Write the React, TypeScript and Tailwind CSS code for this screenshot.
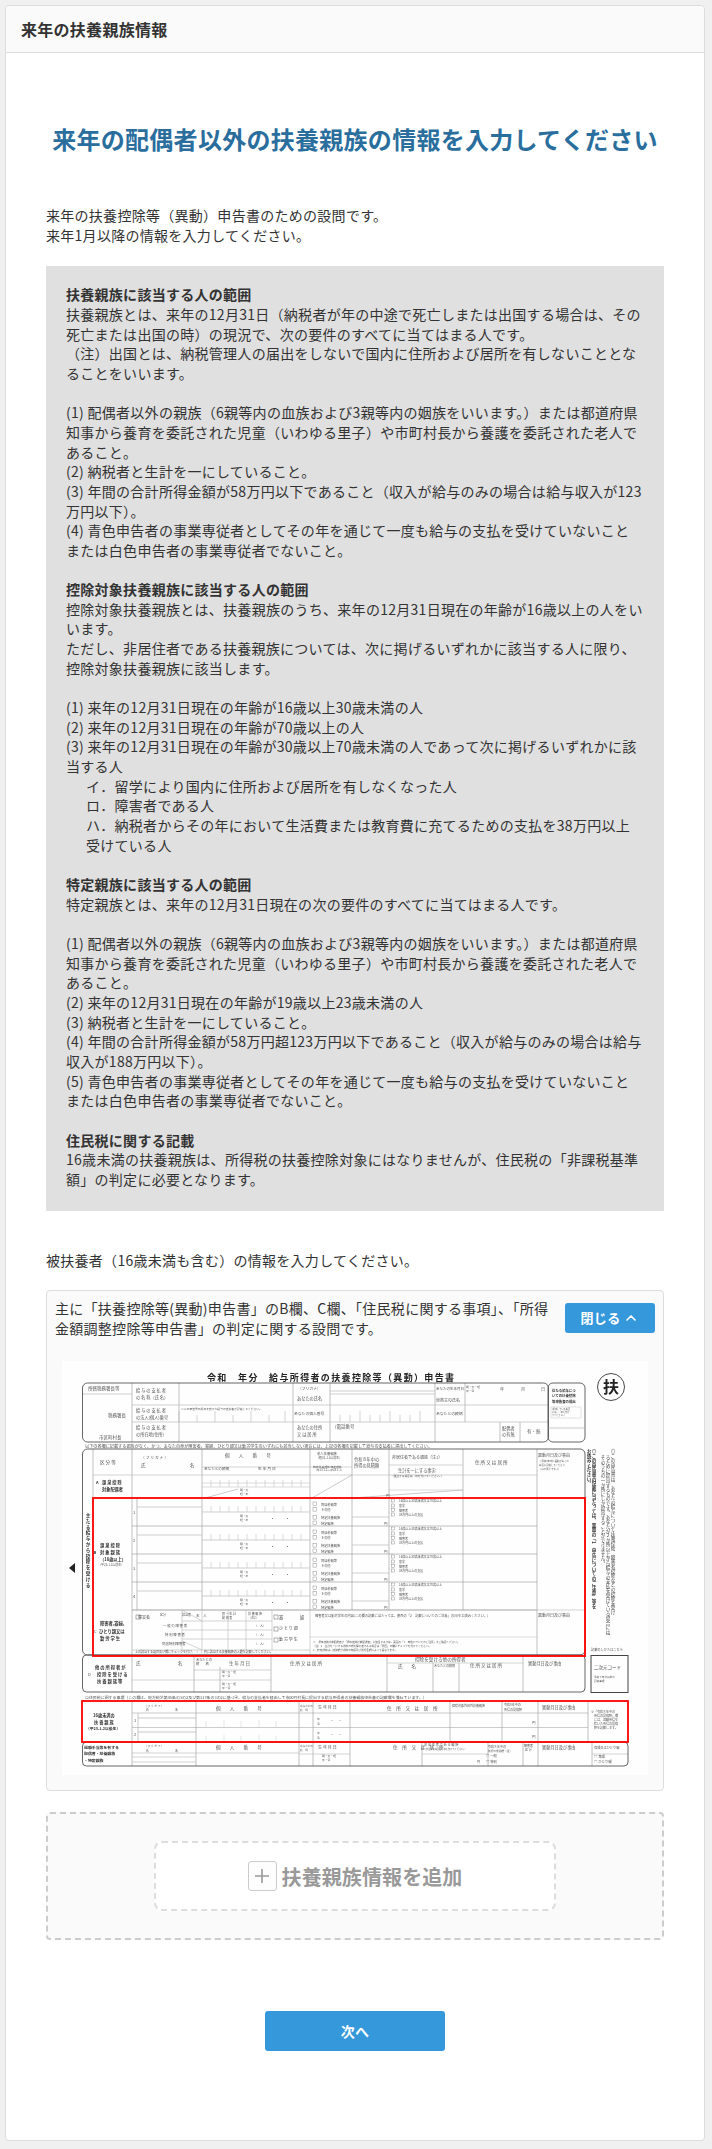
import React from "react";
import { ChevronUp } from "lucide-react";

type TT = [number, number, string, number?, boolean?];

const L = ({ d, c = "#999", w = 0.7 }: { d: string; c?: string; w?: number }) => (
  <path d={d} fill="none" stroke={c} strokeWidth={w} />
);

const texts: TT[] = [
  [88, 1390, "所轄税務署長等", 4.5],
  [108, 1417, "税務署長", 4.5],
  [99, 1439, "市区町村長", 4.5],
  [136, 1392, "給 与 の 支 払 者", 4.2],
  [136, 1399, "の 名 称（氏 名）", 4.2],
  [136, 1412, "給 与 の 支 払 者", 4.2],
  [136, 1419, "の法人(個人)番号", 4.2],
  [136, 1429, "給 与 の 支 払 者", 4.2],
  [136, 1436, "の所在地(住所)", 4.2],
  [181, 1410, "※この申告書の提出を受けた給与の支払者が記載してください。", 2.8],
  [298, 1390, "（フリガナ）", 3.8],
  [297, 1400, "あなたの氏名", 4.2],
  [294, 1415, "あなたの個人番号", 3.8],
  [297, 1429, "あなたの住所", 4.2],
  [297, 1436, "又 は 居 所", 4.2],
  [332, 1428, "（電話番号", 4.5],
  [436, 1390, "あなたの生年月日", 3.5],
  [466, 1388, "明・大・昭", 2.8],
  [466, 1392, "平・令", 2.8],
  [500, 1391, "年", 4],
  [521, 1391, "月", 4],
  [541, 1391, "日", 4],
  [436, 1402, "世帯主の氏名", 4],
  [436, 1415, "あなたとの続柄", 3.8],
  [502, 1430, "配偶者", 4.2],
  [502, 1436, "の有無", 4.2],
  [527, 1433, "有・無", 4.5],
  [85, 1448, "以下の各欄に記載する親族がなく、かつ、あなた自身が障害者、寡婦、ひとり親又は勤労学生のいずれにも該当しない場合には、上記の各欄を記載して給与の支払者に提出してください。", 4.15],
  [100, 1464, "区 分 等", 4.6],
  [141, 1459, "（ フ リ ガ ナ ）", 3.8],
  [141, 1467, "氏", 4.5],
  [190, 1467, "名", 4.5],
  [225, 1457, "個　　人　　番　　号", 4.6],
  [204, 1470, "あなたとの続柄", 3.6],
  [258, 1470, "生 年 月 日", 3.8],
  [317, 1455, "老人扶養親族", 3.3],
  [316, 1459, "（昭31.1.1以前生）", 3],
  [313, 1468, "特定扶養親族 特定親族", 2.8],
  [314, 1471, "（平15.1.2～平23.1.1）", 2.8],
  [354, 1461, "令和８年中の", 4.2],
  [354, 1467, "所得の見積額", 4.2],
  [392, 1459, "非居住者である親族（注1）", 4],
  [398, 1472, "生計を一にする事実", 4.2],
  [391, 1477, "（該当する場合は□印を付けてください。）", 2.7],
  [475, 1464, "住 所 又 は 居 所", 4.6],
  [538, 1457, "異動月日及び事由", 4],
  [539, 1462, "（令和8年中に異動があった", 2.4],
  [539, 1466, "場合に記載してください", 2.4],
  [539, 1470, "（以下同じです。））", 2.4],
  [386, 1497, "円", 3.5],
  [96, 1484, "A", 4, true],
  [102, 1484, "源 泉 控 除", 4.2, true],
  [102, 1491, "対象配偶者", 4.2, true],
  [100, 1547, "源 泉 控 除", 4.3, true],
  [93.5, 1554, "B", 4, true],
  [100, 1554, "対 象 親 族", 4.3, true],
  [100, 1561, "（16歳以上）", 4.2, true],
  [98, 1566, "（平23.1.1以前生）", 3],
  [100, 1625, "障害者,寡婦,", 4.3, true],
  [94, 1633, "C", 4],
  [99, 1633, "ひとり親又は", 4.3, true],
  [100, 1640, "勤 労 学 生", 4.3, true],
  [138, 1619, "障害者", 4],
  [160, 1616, "区分", 3],
  [182, 1616, "該当者", 3],
  [163, 1627, "一 般 の 障 害 者", 3.4],
  [165, 1636, "特 別 障 害 者", 3.4],
  [162, 1645, "同居特別障害者", 3.4],
  [196, 1617, "本　人", 3.6],
  [222, 1615, "同 一 生 計", 3],
  [222, 1619, "配 偶 者", 3],
  [248, 1615, "扶 養 親 族", 3],
  [248, 1619, "（注2）", 3],
  [254, 1627, "（　人）", 3],
  [254, 1636, "（　人）", 3],
  [254, 1645, "（　人）", 3],
  [279, 1619, "寡", 4.2],
  [300, 1619, "婦", 4.2],
  [279, 1630, "ひ と り 親", 4],
  [279, 1641, "勤 労 学 生", 4],
  [135, 1653, "上の該当する項目及び欄にチェックを付け、（　）内に該当する扶養親族の人数を記載してください。", 3],
  [315, 1617, "障害者又は勤労学生の内容(この欄の記載に当たっては、裏面の「2　記載についてのご注意」の(8)をお読みください。)", 3.25],
  [538, 1617, "異動月日及び事由", 4],
  [313, 1643, "※　源泉控除対象配偶者が「源泉控除対象配偶者」に該当するかは、裏面の「1　申告についてのご注意」をご確認ください。", 2.6],
  [313, 1647, "（注）1　生計を一にする親族の特別障害者である場合は「同居」の欄にチェックを付けてください。", 2.6],
  [313, 1651, "2　特定親族は、控除額が親族の年齢及び所得金額によって異なります。", 2.6],
  [95, 1669, "他 の 所 得 者 が", 4.3, true],
  [97, 1676, "控 除 を 受 け る", 4.3, true],
  [97, 1683, "扶 養 親 族 等", 4.3, true],
  [88, 1676, "D", 4],
  [136, 1665, "氏", 4.5],
  [178, 1665, "名", 4.5],
  [196, 1661, "あなたとの", 3.2],
  [196, 1665, "続　　柄", 3.2],
  [229, 1665, "生 年 月 日", 4.5],
  [222, 1673, "明・大・昭", 2.8],
  [222, 1677, "平・令", 2.8],
  [222, 1685, "明・大・昭", 2.8],
  [222, 1689, "平・令", 2.8],
  [290, 1665, "住 所 又 は 居 所", 4.5],
  [415, 1661, "控除を受ける他の所得者", 4.6],
  [398, 1668, "氏　　名", 4.5],
  [434, 1667, "あなたとの続柄", 3],
  [470, 1667, "住 所 又 は 居 所", 4.5],
  [528, 1665, "異動月日及び事由", 4.2],
  [591, 1651, "記載のしかたはこちら", 3.2],
  [594, 1669, "二次元コード", 4.5],
  [594, 1678, "令和７年分以前の", 2.6],
  [594, 1682, "記載事項", 2.6],
  [85, 1699, "〇住民税に関する事項（この欄は、地方税法第45条の3の2及び第317条の3の2に基づき、給与の支払者を経由して市区町村長に提出する給与所得者の扶養親族申告書の記載欄を兼ねています。）", 3.95],
  [93, 1717, "16歳未満の", 4.2, true],
  [94, 1724, "扶 養 親 族", 4.2, true],
  [86, 1730, "（平23.1.2以後生）", 3.8, true],
  [144, 1707, "（ フ リ ガ ナ ）", 2.8],
  [146, 1711, "氏", 3],
  [175, 1711, "名", 3],
  [216, 1710, "個　　人　　番　　号", 4.6],
  [300, 1707, "あなたとの", 2.6],
  [300, 1711, "続　柄", 2.6],
  [318, 1709, "生 年 月 日", 4],
  [387, 1710, "住　所　又　は　居　所", 4.6],
  [452, 1707, "控除対象外国外扶養親族", 3],
  [504, 1706, "令和8年中の", 3],
  [504, 1711, "所得の見積額", 3],
  [542, 1709, "異動月日及び事由", 4.2],
  [134, 1722, "1", 4],
  [134, 1736, "2", 4],
  [532, 1724, "円", 3.5],
  [532, 1738, "円", 3.5],
  [591, 1713, "※「令和８年中の", 3],
  [594, 1717, "所得の見積額」欄", 3],
  [594, 1721, "には、退職所得を", 3],
  [594, 1725, "除いた所得の見積", 3],
  [594, 1729, "額を記載します。", 3],
  [84, 1749, "退職手当等を有する", 3.9, true],
  [84, 1755, "配偶者・扶養親族", 3.9, true],
  [84, 1762, "・特定親族", 3.9, true],
  [144, 1747, "（ フ リ ガ ナ ）", 2.8],
  [146, 1752, "氏", 3],
  [175, 1752, "名", 3],
  [216, 1749, "個　　人　　番　　号", 4.6],
  [300, 1747, "あなたとの", 2.6],
  [300, 1751, "続　柄", 2.6],
  [318, 1749, "生 年 月 日", 4],
  [393, 1749, "住　所　又　は　居　所", 4.6],
  [424, 1746, "非 居 住 者 で あ る 親 族", 3.2],
  [424, 1750, "（該当する場合は□印を付けてください。）", 2.2],
  [488, 1748, "令和８年中の", 3],
  [488, 1752, "所得の見積額（注）", 2.7],
  [524, 1747, "障害者", 3],
  [525, 1751, "区 分", 3],
  [542, 1749, "異動月日及び事由", 4.2],
  [594, 1749, "寡婦又はひとり親", 3.2],
  [322, 1757, "明・大・昭", 2.8],
  [322, 1761, "平・令", 2.8],
  [477, 1763, "円", 3],
  [486, 1757, "□ 一般", 3.4],
  [486, 1763, "□ 特別", 3.4],
  [594, 1758, "□ 寡婦", 3.4],
  [594, 1763, "□ ひとり親", 3.4],
  [552, 1392, "従たる給与につ", 3.4, true],
  [552, 1397, "いての扶養控除", 3.4, true],
  [552, 1403, "等申告書の提出", 3.4, true],
  [552, 1410, "(提出している場合", 2.2],
  [552, 1413, "には、□印を付け", 2.2],
  [552, 1416, "てください。)", 2.2],
];

const rowYs = [1498, 1526, 1554, 1582];

function FormSheet() {
  return (
    <svg
      viewBox="62 1361 586 414"
      className="block w-[586px] h-[414px] bg-[#fefefe] blur-[0.35px] tracking-normal"
      fontFamily="'Noto Sans CJK JP', sans-serif"
    >
      <text x="207" y="1381" fontSize="9" fontWeight="700" fill="#222" letterSpacing="1.35" xmlSpace="preserve">
        令和　年分　給与所得者の扶養控除等（異動）申告書
      </text>
      <circle cx="611" cy="1387" r="13.5" fill="none" stroke="#333" strokeWidth="0.9" />
      <text x="611" y="1393" fontSize="16" fontWeight="700" textAnchor="middle" fill="#222">扶</text>

      <L d="M132 1383V1442M179 1383V1442M293 1383V1442M330 1383V1442M435 1383V1442M465 1383V1422M500 1422V1442M520 1422V1442" w={0.6} />
      <L d="M132 1405H293M132 1422H548M293 1405H548M330 1391H435M330 1394H435M82 1394H132" c="#bbb" w={0.7} />
      <L d="M179 1411V1422M197 1415V1422M215 1411V1422M233 1415V1422M251 1411V1422M269 1415V1422M285 1411V1422M340 1415V1422M350 1415V1422M360 1411V1422M370 1415V1422M380 1415V1422M390 1411V1422M400 1415V1422M410 1415V1422M420 1411V1422" c="#aaa" w={0.5} />
      <rect x="82.5" y="1383" width="466" height="59" rx="5" fill="none" stroke="#555" strokeWidth="0.9" />
      <rect x="548" y="1383" width="37" height="59" rx="5" fill="none" stroke="#555" strokeWidth="0.9" />
      <L d="M548 1428H585" c="#aaa" w={0.6} />
      <rect x="551" y="1407" width="30" height="11" fill="none" stroke="#bbb" strokeWidth="0.4" />

      <L d="M93 1449V1655M132 1449V1655M202 1449V1610M310 1449V1610M352 1449V1610M463 1449V1610M537 1449V1655M389 1449V1610" w={0.6} c="#999" />
      <L d="M93 1475H537M202 1467H352M389 1465H463M93 1498H585" c="#bbb" w={0.6} />
      <L d="M132 1610H585M132 1650H310" c="#bbb" w={0.6} />
      <L d="M205 1498L238 1489M312 1498L352 1475M352 1498L463 1490" w={0.5} />
      <L d="M202 1483H310M202 1487H310M389 1490H463" c="#bbb" w={0.5} />
      <L d="M211 1480V1487M220 1480V1487M229 1480V1487M238 1480V1487M247 1480V1487M256 1480V1487M265 1480V1487M274 1480V1487M283 1480V1487M292 1480V1487M301 1480V1487" c="#bbb" w={0.5} />
      <text x="240" y="1491" fontSize="2.8" fill="#555">明・大</text>
      <text x="240" y="1495" fontSize="2.8" fill="#555">昭・平</text>
      {rowYs.map((y, i) => (
        <g key={y}>
          <text x="133" y={y + 16} fontSize="4" fill="#555">{i + 1}</text>
          <L d={`M132 ${y + 28}H537M137 ${y}V${y + 28}`} c="#999" w={0.6} />
          <L d={`M137 ${y + 9}H202M202 ${y + 14}H310M352 ${y + 19}H389`} c="#bbb" w={0.7} />
          <L d={`M211 ${y + 8}V${y + 14}M220 ${y + 8}V${y + 14}M229 ${y + 8}V${y + 14}M238 ${y + 8}V${y + 14}M247 ${y + 8}V${y + 14}M256 ${y + 8}V${y + 14}M265 ${y + 8}V${y + 14}M274 ${y + 8}V${y + 14}M283 ${y + 8}V${y + 14}M292 ${y + 8}V${y + 14}M301 ${y + 8}V${y + 14}`} c="#bbb" w={0.5} />
          <text x="240" y={y + 19} fontSize="2.8" fill="#555">明・大</text>
          <text x="240" y={y + 23} fontSize="2.8" fill="#555">昭・平</text>
          <text x="270" y={y + 22} fontSize="5" fill="#555">・　　・</text>
          <rect x="313" y={y + 4} width="3.6" height="3.6" fill="none" stroke="#777" strokeWidth="0.4" />
          <rect x="313" y={y + 9.5} width="3.6" height="3.6" fill="none" stroke="#777" strokeWidth="0.4" />
          <rect x="313" y={y + 17.5} width="3.6" height="3.6" fill="none" stroke="#777" strokeWidth="0.4" />
          <rect x="313" y={y + 23} width="3.6" height="3.6" fill="none" stroke="#777" strokeWidth="0.4" />
          <text x="321" y={y + 7.5} fontSize="3.2" fill="#555">同居老親等</text>
          <text x="321" y={y + 13} fontSize="3.2" fill="#555">その他</text>
          <text x="321" y={y + 21} fontSize="3.2" fill="#555">特定扶養親族</text>
          <text x="321" y={y + 26.5} fontSize="3.2" fill="#555">特定親族</text>
          <text x="384" y={y + 27} fontSize="3.5" fill="#555">円</text>
          {[3, 8, 12.5, 17].map((d, k) => (
            <g key={d}>
              <rect x="391.5" y={y + d - 2} width="3" height="3" fill="none" stroke="#777" strokeWidth="0.4" />
              <text x="399" y={y + d + 1} fontSize="3" fill="#555">
                {["16歳以上30歳未満又は70歳以上", "留学", "障害者", "38万円以上の支払"][k]}
              </text>
            </g>
          ))}
        </g>
      ))}
      <L d="M182 1610V1650M202 1610V1650M228 1610V1650M246 1610V1650M272 1610V1650M310 1610V1655M182 1621H272M182 1630H272M182 1639H272M182 1610L202 1621M202 1650L182 1641" c="#bbb" w={0.6} />
      <rect x="136" y="1615" width="4" height="4" fill="none" stroke="#666" strokeWidth="0.5" />
      <rect x="274" y="1615" width="4" height="4" fill="none" stroke="#666" strokeWidth="0.5" />
      <rect x="274" y="1627" width="4" height="4" fill="none" stroke="#666" strokeWidth="0.5" />
      <rect x="274" y="1638" width="4" height="4" fill="none" stroke="#666" strokeWidth="0.5" />
      <L d="M310 1637H537" c="#bbb" w={0.5} />
      <rect x="82.5" y="1449" width="502.5" height="206" rx="5" fill="none" stroke="#555" strokeWidth="0.9" />

      <L d="M132 1655V1692M194 1655V1692M220 1667V1692M271 1655V1692M387 1655V1692M433 1663V1692M459 1663V1692M523 1655V1692" c="#999" w={0.6} />
      <L d="M194 1670H271M194 1680H271M387 1663H523M132 1680H194" c="#bbb" w={0.6} />
      <rect x="82.5" y="1655" width="502.5" height="37" rx="4" fill="none" stroke="#555" strokeWidth="0.9" />

      <L d="M132 1701V1742M196 1701V1742M299 1701V1742M313 1701V1742M350 1701V1742M450 1701V1742M502 1701V1742M538 1701V1742M588 1701V1742" c="#999" w={0.6} />
      <L d="M132 1713H588M132 1727.5H588M138 1713V1742M138 1718H196M138 1732H196" c="#aaa" w={0.6} />
      <L d="M206 1721V1727M224 1720V1727M241 1721V1727M259 1720V1727M276 1721V1727M206 1736V1742M224 1735V1742M241 1736V1742M259 1735V1742M276 1736V1742" c="#ccc" w={0.5} />
      <text x="317" y="1720" fontSize="2.8" fill="#555">平</text>
      <text x="317" y="1725" fontSize="2.8" fill="#555">令</text>
      <text x="330" y="1723" fontSize="4" fill="#555">・　・</text>
      <text x="317" y="1734" fontSize="2.8" fill="#555">平</text>
      <text x="317" y="1739" fontSize="2.8" fill="#555">令</text>
      <text x="330" y="1737" fontSize="4" fill="#555">・　・</text>

      <L d="M132 1742V1766M196 1742V1766M299 1742V1766M313 1742V1766M350 1742V1766M422 1742V1766M488 1742V1766M523 1742V1766M538 1742V1766M592 1742V1766" c="#999" w={0.6} />
      <L d="M132 1753H299M132 1757H196M132 1762H196M299 1754H350M422 1754H488M592 1754H628" c="#bbb" w={0.6} />
      <rect x="82.5" y="1742" width="545.5" height="24" rx="4" fill="none" stroke="#555" strokeWidth="0.9" />

      <rect x="591" y="1655.5" width="37" height="37" fill="none" stroke="#444" strokeWidth="1" />
      <path d="M69 1568L75 1563V1573Z" fill="#222" />

      <text x="88" y="1513" fontSize="4.6" fontWeight="700" fill="#333" writingMode="vertical-rl" letterSpacing="1.2">主たる給与から控除を受ける</text>
      <text x="613" y="1449" fontSize="4.6" fill="#444" writingMode="vertical-rl">◎この申告書は、あなたの給与について扶養控除、障害者控除などの控除を受け</text>
      <text x="608" y="1455" fontSize="4.6" fill="#444" writingMode="vertical-rl">るために提出するものです。あなたが２か所以上から給与の支払を受けている場合には、</text>
      <text x="603" y="1455" fontSize="4.6" fill="#444" writingMode="vertical-rl">そのうちの一か所にしか提出することができません。</text>
      <text x="594" y="1449" fontSize="4.6" fontWeight="700" fill="#333" writingMode="vertical-rl">◎この申告書の記載に当たっては、裏面の「1　申告についてのご注意」等を</text>
      <text x="589" y="1449" fontSize="4.6" fontWeight="700" fill="#333" writingMode="vertical-rl">お読みください。</text>

      {texts.map(([x, y, s, size = 4, bold], i) => (
        <text key={i} x={x} y={y} fontSize={size} fontWeight={bold ? 700 : 400} fill={bold ? "#333" : "#555"}>
          {s}
        </text>
      ))}

      <rect x="93" y="1498" width="492" height="158" fill="none" stroke="#ff0000" strokeWidth="1.8" />
      <rect x="82" y="1701" width="546" height="41" fill="none" stroke="#ff0000" strokeWidth="1.8" />
    </svg>
  );
}

const definition =
  "(1) 配偶者以外の親族（6親等内の血族および3親等内の姻族をいいます。）または都道府県知事から養育を委託された児童（いわゆる里子）や市町村長から養護を委託された老人であること。";

export default function App() {
  return (
    <div className="min-h-[2149px] bg-[#f0f0f0] pt-[5px] pb-2 font-['Noto_Sans_CJK_JP','Noto_Sans',sans-serif] text-[14px] leading-[19.65px] tracking-[0.02em] text-[#333]">
      <div className="ml-[5px] w-[700px] h-[2136px] rounded border border-[#dddddd] bg-white">
        <div className="flex h-[47px] items-center rounded-t border-b border-[#dddddd] bg-[#fafafa] pl-[15px] pt-[2px] text-[16px] font-bold">
          来年の扶養親族情報
        </div>
        <div className="px-10">
          <h1 className="mt-[69px] text-center text-[24px] leading-[34px] font-bold text-[#2a6e9e]">
            来年の配偶者以外の扶養親族の情報を入力してください
          </h1>
          <p className="mt-[50px]">
            来年の扶養控除等（異動）申告書のための設問です。
            <br />
            来年1月以降の情報を入力してください。
          </p>

          <div className="mt-[21px] bg-[#e0e0e0] pl-5 pr-[19px] pt-[19px] pb-[21px]">
            <p className="font-bold">扶養親族に該当する人の範囲</p>
            <p>扶養親族とは、来年の12月31日（納税者が年の中途で死亡しまたは出国する場合は、その死亡または出国の時）の現況で、次の要件のすべてに当てはまる人です。</p>
            <p>（注）出国とは、納税管理人の届出をしないで国内に住所および居所を有しないこととなることをいいます。</p>
            <br />
            <p>{definition}</p>
            <p>(2) 納税者と生計を一にしていること。</p>
            <p>(3) 年間の合計所得金額が58万円以下であること（収入が給与のみの場合は給与収入が123万円以下）。</p>
            <p>(4) 青色申告者の事業専従者としてその年を通じて一度も給与の支払を受けていないこと<br />または白色申告者の事業専従者でないこと。</p>
            <br />
            <p className="font-bold">控除対象扶養親族に該当する人の範囲</p>
            <p>控除対象扶養親族とは、扶養親族のうち、来年の12月31日現在の年齢が16歳以上の人をいいます。</p>
            <p>ただし、非居住者である扶養親族については、次に掲げるいずれかに該当する人に限り、控除対象扶養親族に該当します。</p>
            <br />
            <p>(1) 来年の12月31日現在の年齢が16歳以上30歳未満の人</p>
            <p>(2) 来年の12月31日現在の年齢が70歳以上の人</p>
            <p>(3) 来年の12月31日現在の年齢が30歳以上70歳未満の人であって次に掲げるいずれかに該当する人</p>
            <div className="pl-5">
              <p>イ．留学により国内に住所および居所を有しなくなった人</p>
              <p>ロ．障害者である人</p>
              <p>ハ．納税者からその年において生活費または教育費に充てるための支払を38万円以上<br />受けている人</p>
            </div>
            <br />
            <p className="font-bold">特定親族に該当する人の範囲</p>
            <p>特定親族とは、来年の12月31日現在の次の要件のすべてに当てはまる人です。</p>
            <br />
            <p>{definition}</p>
            <p>(2) 来年の12月31日現在の年齢が19歳以上23歳未満の人</p>
            <p>(3) 納税者と生計を一にしていること。</p>
            <p>(4) 年間の合計所得金額が58万円超123万円以下であること（収入が給与のみの場合は給与収入が188万円以下）。</p>
            <p>(5) 青色申告者の事業専従者としてその年を通じて一度も給与の支払を受けていないこと<br />または白色申告者の事業専従者でないこと。</p>
            <br />
            <p className="font-bold">住民税に関する記載</p>
            <p>16歳未満の扶養親族は、所得税の扶養控除対象にはなりませんが、住民税の「非課税基準額」の判定に必要となります。</p>
          </div>

          <p className="mt-10">被扶養者（16歳未満も含む）の情報を入力してください。</p>

          <div className="mt-5 rounded border border-[#dddddd] bg-[#fafafa] pb-[15px]">
            <div className="flex items-start justify-between px-2 pt-2">
              <p className="w-[500px]">主に「扶養控除等(異動)申告書」のB欄、C欄、「住民税に関する事項」、「所得金額調整控除等申告書」の判定に関する設問です。</p>
              <button className="mt-1 flex h-[30px] w-[90px] items-center justify-center gap-[3px] rounded-[3px] bg-[#3498db] text-[13px] font-bold text-white">
                閉じる
                <ChevronUp size={16} strokeWidth={2.5} />
              </button>
            </div>
            <div className="mx-[15px] mt-[23px]">
              <FormSheet />
            </div>
          </div>

          <div className="mt-[21px] flex h-[128px] items-center justify-center rounded border-2 border-dashed border-[#cccccc] bg-[#fafafa]">
            <button className="flex h-[70px] w-[402px] items-center justify-center gap-[5px] rounded-lg border-2 border-dashed border-[#dddddd] bg-white text-[20px] font-bold tracking-[0.005em] text-[#999999]">
              <span className="flex h-[30px] w-[29px] items-center justify-center rounded-[3px] border border-[#cccccc] bg-[#fdfdfd]">
                <svg viewBox="0 0 20 20" className="h-5 w-5" fill="none" stroke="#999999" strokeWidth="1.6">
                  <path d="M10 3V17M3 10H17" />
                </svg>
              </span>
              扶養親族情報を追加
            </button>
          </div>

          <div className="mt-[71px] flex justify-center">
            <button className="h-10 w-[180px] rounded-[3px] bg-[#3498db] font-bold text-white">次へ</button>
          </div>
        </div>
      </div>
    </div>
  );
}
